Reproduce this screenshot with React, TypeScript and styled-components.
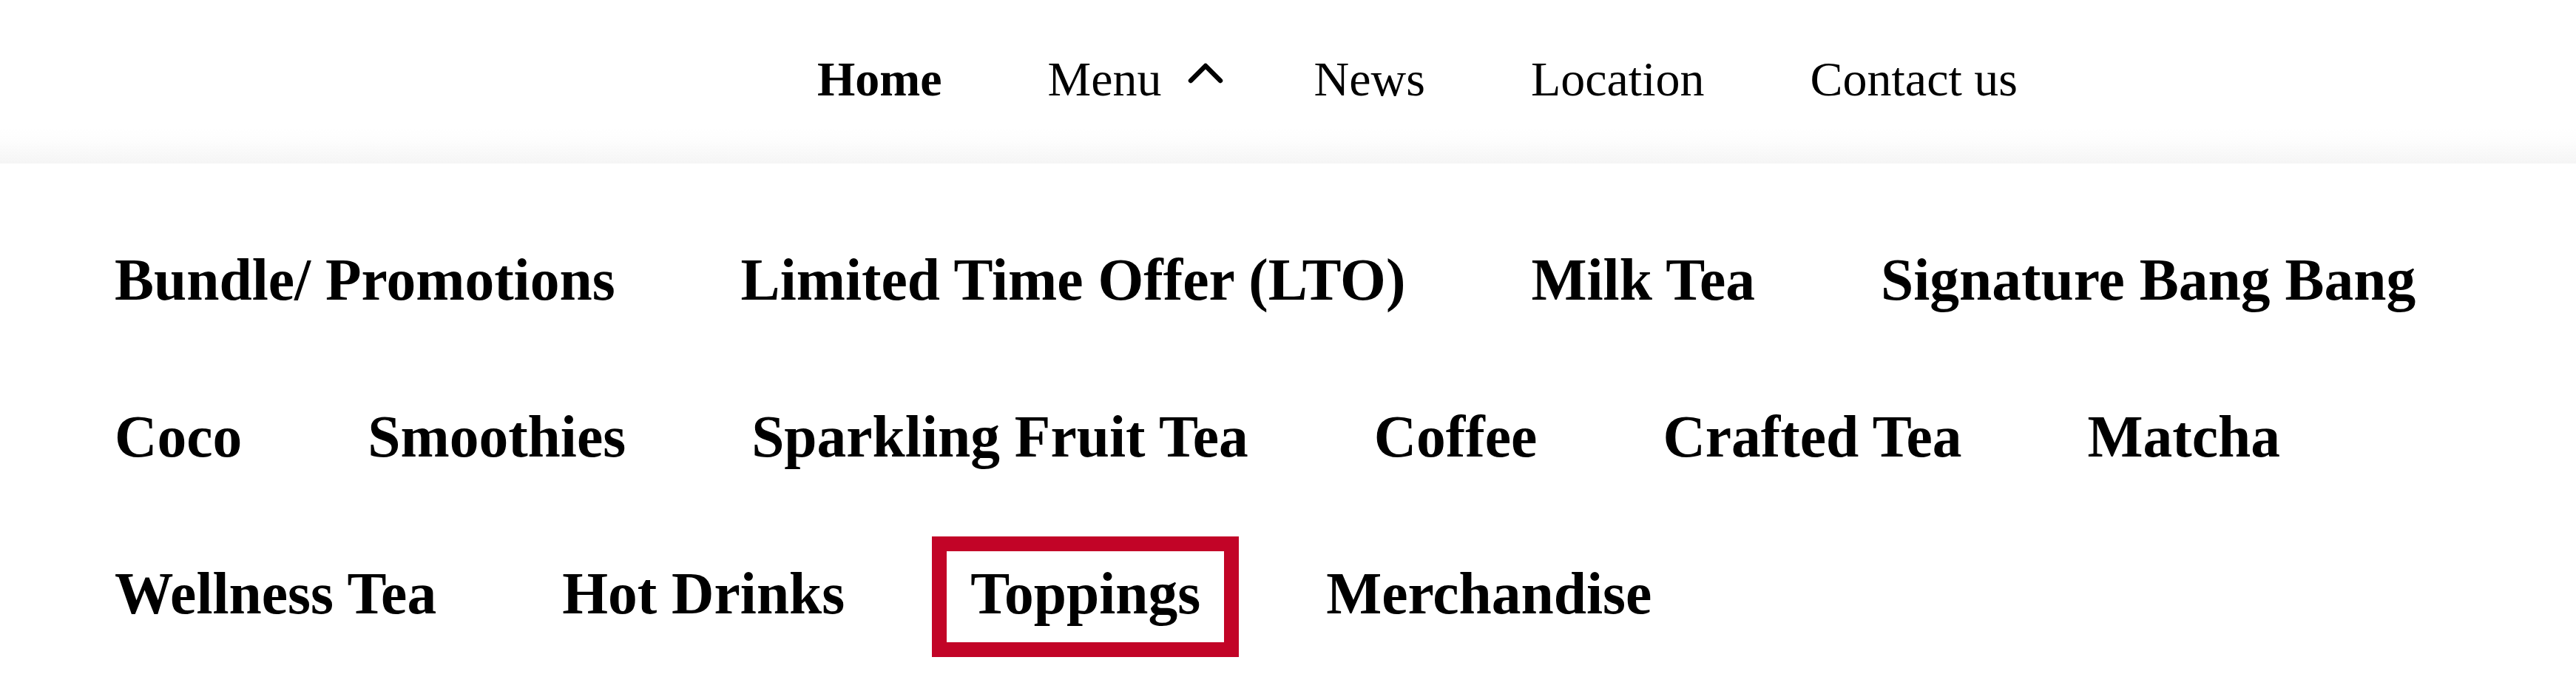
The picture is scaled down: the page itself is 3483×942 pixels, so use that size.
import React from "react";
import styled, { createGlobalStyle } from "styled-components";

const GlobalStyle = createGlobalStyle`
  html, body {
    margin: 0;
    padding: 0;
    background: #ffffff;
  }
  body {
    font-family: "Liberation Serif", "Times New Roman", serif;
    color: #000000;
  }
  * { box-sizing: border-box; }
`;

const Page = styled.div`
  width: 100%;
  min-height: 942px;
  background: #ffffff;
`;

const Header = styled.header`
  height: 221px;
  padding: 69px 0 0 1105px;
  background: linear-gradient(
    to bottom,
    #ffffff 0px,
    #ffffff 173px,
    #fdfdfd 190px,
    #f5f5f5 221px
  );
`;

const Nav = styled.nav`
  display: flex;
  align-items: flex-start;
  gap: 143px;
`;

const NavLink = styled.a<{ $active?: boolean }>`
  display: flex;
  align-items: flex-start;
  gap: 34px;
  font-family: "Liberation Serif", "Times New Roman", serif;
  font-size: 66px;
  line-height: 76px;
  font-weight: ${(p) => (p.$active ? 700 : 400)};
  color: #000000;
  text-decoration: none;
  white-space: nowrap;
`;

const Caret = styled.svg`
  display: block;
  width: 50px;
  height: 30px;
  margin-top: 15px;
  margin-right: -21px;
  flex: none;
`;

const Panel = styled.section`
  padding: 80px 40px 0 103px;
`;

const CategoryList = styled.ul`
  list-style: none;
  margin: 0;
  padding: 0;
  display: flex;
  flex-wrap: wrap;
  column-gap: 66px;
  row-gap: 49px;
`;

const Category = styled.li<{ $selected?: boolean }>`
  border: 20px solid ${(p) => (p.$selected ? "#c20427" : "transparent")};
  padding: 12px 32px 20px;
  font-family: "Liberation Serif", "Times New Roman", serif;
  font-size: 79.5px;
  line-height: 91px;
  font-weight: 700;
  color: #000000;
  white-space: nowrap;
`;

const categories = [
  "Bundle/ Promotions",
  "Limited Time Offer (LTO)",
  "Milk Tea",
  "Signature Bang Bang",
  "Coco",
  "Smoothies",
  "Sparkling Fruit Tea",
  "Coffee",
  "Crafted Tea",
  "Matcha",
  "Wellness Tea",
  "Hot Drinks",
  "Toppings",
  "Merchandise",
];

export default function App() {
  return (
    <Page>
      <GlobalStyle />
      <Header>
        <Nav>
          <NavLink $active href="#">Home</NavLink>
          <NavLink href="#">
            Menu
            <Caret viewBox="0 0 50 30" aria-hidden="true">
              <polyline
                points="5,25 25,5 45,25"
                fill="none"
                stroke="#000"
                strokeWidth="6.5"
                strokeLinecap="round"
                strokeLinejoin="round"
              />
            </Caret>
          </NavLink>
          <NavLink href="#">News</NavLink>
          <NavLink href="#">Location</NavLink>
          <NavLink href="#">Contact us</NavLink>
        </Nav>
      </Header>
      <Panel>
        <CategoryList>
          {categories.map((c) => (
            <Category key={c} $selected={c === "Toppings"}>
              {c}
            </Category>
          ))}
        </CategoryList>
      </Panel>
    </Page>
  );
}
